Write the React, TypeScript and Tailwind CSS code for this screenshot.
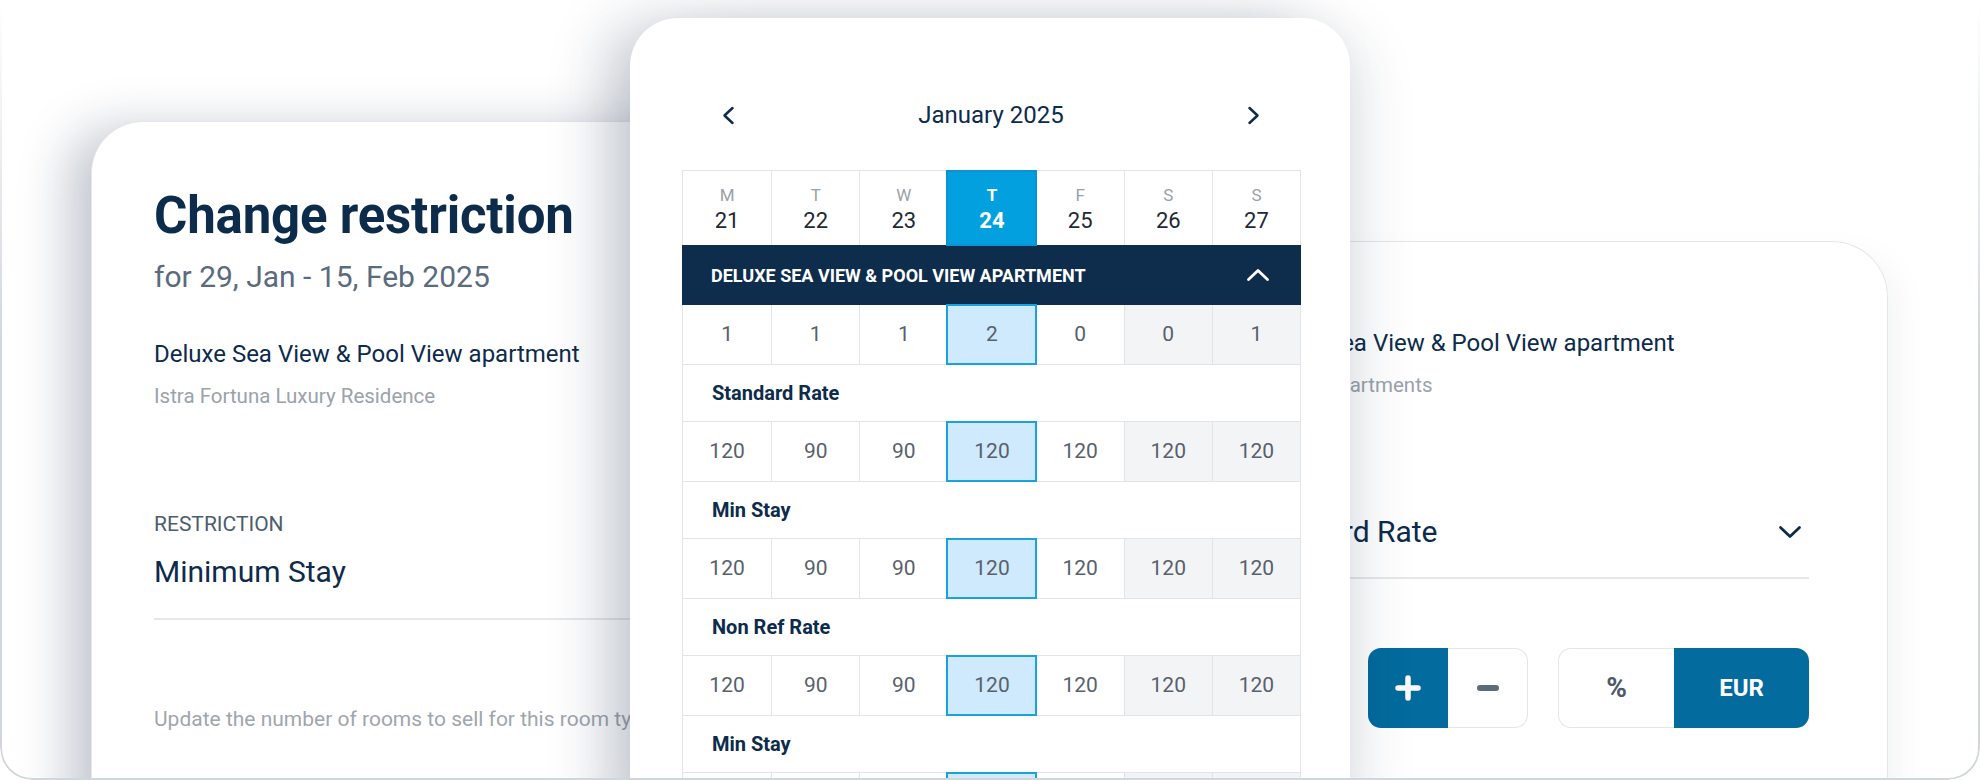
import React from 'react'

const font = { fontFamily: 'Roboto, "Noto Sans", Arial, sans-serif' }

const days = [
  { l: 'M', n: 21 },
  { l: 'T', n: 22 },
  { l: 'W', n: 23 },
  { l: 'T', n: 24 },
  { l: 'F', n: 25 },
  { l: 'S', n: 26 },
  { l: 'S', n: 27 },
]

const TODAY = 3

const sections = [
  { label: 'Standard Rate', values: [120, 90, 90, 120, 120, 120, 120] },
  { label: 'Min Stay', values: [120, 90, 90, 120, 120, 120, 120] },
  { label: 'Non Ref Rate', values: [120, 90, 90, 120, 120, 120, 120] },
  { label: 'Min Stay', values: [120, 90, 90, 120, 120, 120, 120] },
]

const Chevron = ({ dir, className }: { dir: 'left' | 'right' | 'up' | 'down'; className?: string }) => {
  if (dir === 'left' || dir === 'right') {
    return (
      <svg width="13" height="19" viewBox="0 0 13 19" fill="none" className={className}>
        <path
          d={dir === 'left' ? 'M10.5 2 L2.5 9.5 L10.5 17' : 'M2.5 2 L10.5 9.5 L2.5 17'}
          stroke="currentColor"
          strokeWidth="2.5"
          strokeLinecap="round"
          strokeLinejoin="round"
        />
      </svg>
    )
  }
  return (
    <svg width="24" height="14" viewBox="0 0 24 14" fill="none" className={className}>
      <path
        d={dir === 'up' ? 'M2.5 11.5 L12 2.5 L21.5 11.5' : 'M2.5 2.5 L12 11.5 L21.5 2.5'}
        stroke="currentColor"
        strokeWidth="2.8"
        strokeLinecap="round"
        strokeLinejoin="round"
      />
    </svg>
  )
}

const ValueRow = ({ values }: { values: (number | string)[] }) => (
  <div className="grid grid-cols-7 h-[60px] border-x-[1.5px] border-b-[1.5px] border-[#e2e5e8]">
    {values.map((v, i) => (
      <div
        key={i}
        className={
          'flex items-center justify-center text-[21px] text-[#58616c] ' +
          (i > 0 ? 'border-l-[1.5px] border-[#e2e5e8] ' : '') +
          (i === TODAY
            ? 'relative z-10 bg-[#cfeafc] outline-2 outline-[#1aa2dc] -outline-offset-1'
            : i >= 5
              ? 'bg-[#f3f4f6]'
              : 'bg-white')
        }
      >
        {v}
      </div>
    ))}
  </div>
)

const LabelRow = ({ label }: { label: string }) => (
  <div className="h-[57px] flex items-center pl-[29px] border-x-[1.5px] border-b-[1.5px] border-[#e2e5e8] text-[20px] font-bold text-[#0d2b4b]">
    {label}
  </div>
)

function CalendarCard() {
  return (
    <div className="absolute left-[630px] top-[18px] z-20 w-[720px] h-[820px] bg-white rounded-t-[48px] shadow-[-30px_0_60px_-10px_rgba(20,40,70,0.28),30px_0_60px_-22px_rgba(20,40,70,0.14)]">
      {/* Month nav */}
      <div className="mt-[77px] h-[40px] pl-[92px] pr-[90px] flex items-center justify-between text-[#0d2b4b]">
        <Chevron dir="left" />
        <span className="text-[24px] leading-[30px]">January 2025</span>
        <Chevron dir="right" />
      </div>

      <div className="mt-[35px] ml-[52px] w-[619px]">
        {/* Day header */}
        <div className="grid grid-cols-7 h-[75px] border-x-[1.5px] border-t-[1.5px] border-[#e2e5e8]">
          {days.map((d, i) => (
            <div
              key={i}
              className={
                'flex flex-col items-center pt-[14px] gap-[3px] ' +
                (i > 0 ? 'border-l-[1.5px] border-[#e2e5e8] ' : '') +
                (i === TODAY ? 'relative z-10 bg-[#03a0df] outline-2 outline-[#0b93cf] -outline-offset-1' : 'bg-white')
              }
            >
              <span
                className={
                  'text-[17px] leading-[20px] ' + (i === TODAY ? 'text-white font-bold' : 'text-[#9aa1a9]')
                }
              >
                {d.l}
              </span>
              <span
                className={
                  'text-[22px] leading-[26px] ' + (i === TODAY ? 'text-white font-bold' : 'text-[#1f2933]')
                }
              >
                {d.n}
              </span>
            </div>
          ))}
        </div>

        {/* Room type bar */}
        <div className="h-[60px] bg-[#0e2d4d] flex items-center justify-between pl-[29px] pr-[31px]">
          <span className="text-[18px] font-bold text-white uppercase">Deluxe Sea View &amp; Pool View Apartment</span>
          <Chevron dir="up" className="text-white" />
        </div>

        <ValueRow values={[1, 1, 1, 2, 0, 0, 1]} />
        {sections.map((s, i) => (
          <React.Fragment key={i}>
            <LabelRow label={s.label} />
            <ValueRow values={s.values} />
          </React.Fragment>
        ))}
      </div>
    </div>
  )
}

function RestrictionCard() {
  return (
    <div className="absolute left-[91px] top-[121px] z-0 w-[760px] h-[720px] bg-white rounded-tl-[52px] border-l-[1.5px] border-t-[1.5px] border-[#e3e6ea] shadow-[-30px_0_50px_-8px_rgba(20,40,70,0.26)]">
      <div className="pl-[62px] pt-[63px] flex flex-col">
        <h1 className="text-[51px] leading-[61px] font-bold text-[#0d2b4b] tracking-[-0.2px]">Change restriction</h1>
        <p className="mt-[13px] text-[30px] leading-[36px] text-[#5b6b7e]">for 29, Jan - 15, Feb 2025</p>
        <p className="mt-[45px] text-[24px] leading-[28px] text-[#0d2b4b]">Deluxe Sea View &amp; Pool View apartment</p>
        <p className="mt-[16px] text-[20.5px] leading-[24px] text-[#9aa2ab]">Istra Fortuna Luxury Residence</p>
        <p className="mt-[104px] text-[21px] leading-[24px] text-[#4d5d6e] uppercase">Restriction</p>
        <p className="mt-[18px] text-[30px] leading-[36px] text-[#0d2b4b]">Minimum Stay</p>
        <div className="mt-[28px] h-[2px] bg-[#e5e8eb]" />
        <p className="mt-[87px] text-[21px] leading-[24px] text-[#a0a6ad] whitespace-nowrap">
          Update the number of rooms to sell for this room type on the selected dates.
        </p>
      </div>
    </div>
  )
}

function RateCard() {
  return (
    <div className="absolute left-[1150px] top-[241px] z-10 w-[738px] h-[600px] bg-white rounded-tr-[56px] border-r-[1.5px] border-t-[1.5px] border-[#e3e6ea] shadow-[24px_0_40px_-24px_rgba(20,40,70,0.08)]">
      <div className="pl-[99px] pr-[78px] pt-[87px] flex flex-col">
        <p className="text-[24px] leading-[28px] text-[#0d2b4b] whitespace-nowrap">Deluxe Sea View &amp; Pool View apartment</p>
        <p className="mt-[16px] text-[20.5px] leading-[24px] text-[#9aa2ab] whitespace-nowrap">Fortuna Apartments</p>
        <div className="mt-[117px] flex items-center justify-between pr-[7px]">
          <span className="text-[30px] leading-[36px] text-[#0d2b4b]">Standard Rate</span>
          <Chevron dir="down" className="text-[#0d2b4b]" />
        </div>
        <div className="mt-[27px] h-[2px] bg-[#e5e8eb]" />
        <div className="mt-[69px] flex justify-end gap-[30px]">
          <div className="flex h-[80px]">
            <button className="w-[80px] h-full flex items-center justify-center bg-[#036b9d] rounded-l-[13px]">
              <svg width="26" height="26" viewBox="0 0 26 26">
                <path d="M13 3 V23 M3 13 H23" stroke="white" strokeWidth="5.5" strokeLinecap="round" />
              </svg>
            </button>
            <button className="w-[80px] h-full flex items-center justify-center bg-white border-[1.5px] border-l-0 border-[#e3e6ea] rounded-r-[13px]">
              <span className="block w-[22px] h-[6px] rounded-[3px] bg-[#5a6b7c]" />
            </button>
          </div>
          <div className="flex h-[80px]">
            <button className="w-[116px] h-full flex items-center justify-center bg-white border-[1.5px] border-r-0 border-[#e3e6ea] rounded-l-[13px] text-[28px] font-bold text-[#4b5b6b]">
              %
            </button>
            <button className="w-[135px] h-full flex items-center justify-center bg-[#036b9d] rounded-r-[13px] text-[24px] font-bold text-white">
              EUR
            </button>
          </div>
        </div>
      </div>
    </div>
  )
}

export default function App() {
  return (
    <div className="bg-white" style={font}>
      <div className="relative w-[1980px] h-[780px] overflow-hidden bg-white rounded-b-[32px]">
        <RestrictionCard />
        <RateCard />
        <CalendarCard />
        <div className="pointer-events-none absolute inset-0 z-40 rounded-b-[32px] border-x-2 border-b-2 border-[#d0d6dc] [mask-image:linear-gradient(to_bottom,transparent_0%,black_45%)]" />
      </div>
    </div>
  )
}
